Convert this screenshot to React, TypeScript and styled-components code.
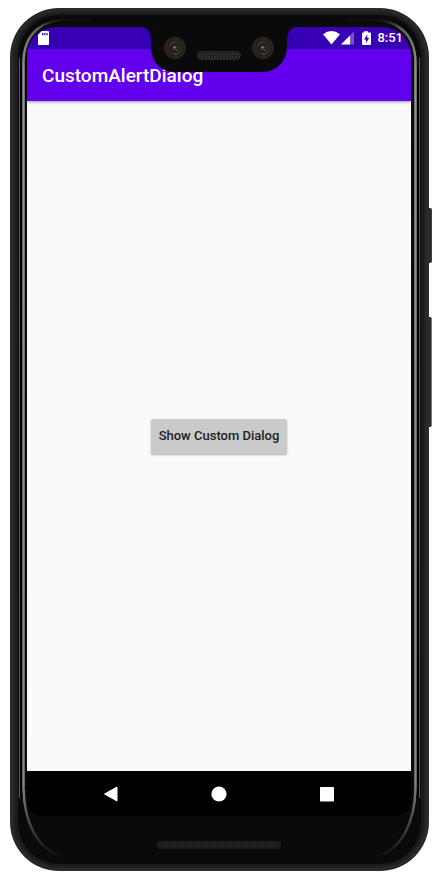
import React from "react";
import styled, { createGlobalStyle } from "styled-components";

const GlobalStyle = createGlobalStyle`
  *, *::before, *::after { box-sizing: border-box; }
  html, body { margin: 0; background: #fff; }
  body { font-family: Roboto, "Liberation Sans", sans-serif; }
`;

const Page = styled.main`
  display: grid;
  min-height: 100vh;
  padding: 8px 11px 9px 10px;
`;

const Phone = styled.div`
  position: relative;
  display: flex;
  border-radius: 49px;
  padding: 1px;
  background: #2c2c2d;
`;

const Frame = styled.div`
  flex: 1;
  display: flex;
  border-radius: 48px;
  padding: 6px 7px;
  background: #1d1d1d;
  box-shadow: inset 0 0 0 2px #2a2a2b, inset 0 0 0 4px #232324, inset 0 0 3px 5px #1a1a1b;
`;

const Bezel = styled.div`
  flex: 1;
  display: flex;
  flex-direction: column;
  border-radius: 41px;
  padding: 12px 10px 0 9px;
  background: #0a0a0a;
`;

const Rim = styled.svg`
  position: absolute;
  inset: 0;
  width: 100%;
  height: 100%;
  pointer-events: none;
`;

const SideKey = styled.span<{ $top: number; $height: number; $edge: string }>`
  position: absolute;
  left: 100%;
  top: ${(p) => p.$top}px;
  width: 3px;
  height: ${(p) => p.$height}px;
  border-radius: 0 2px 2px 0;
  background: #2b2828;
  border-right: 1px solid ${(p) => p.$edge};
`;

const Screen = styled.div`
  position: relative;
  flex: 1;
  display: flex;
  flex-direction: column;
  overflow: hidden;
  border-radius: 28px 28px 16px 16px;
  background: #000;
`;

const StatusBar = styled.div`
  display: flex;
  align-items: center;
  justify-content: space-between;
  height: 22px;
  padding: 0 8px 0 11px;
  background: #3700b3;
  color: #fff;
`;

const StatusGroup = styled.div`
  display: flex;
  align-items: center;
`;

const Clock = styled.time`
  margin-left: 4px;
  font-size: 13px;
  line-height: 22px;
  font-weight: 500;
`;

const AppBar = styled.header`
  position: relative;
  display: flex;
  align-items: center;
  height: 52px;
  padding: 2px 15px 0;
  background: #6200ee;
  box-shadow: 0 1px 3px rgba(0, 0, 0, 0.4);
`;

const Title = styled.h1`
  margin: 0;
  color: #fff;
  font-size: 19px;
  line-height: 24px;
  font-weight: 500;
`;

const Notch = styled.svg`
  position: absolute;
  top: 0;
  left: 50%;
  width: 152px;
  height: 46px;
  transform: translateX(-50%);
`;

const Content = styled.section`
  flex: 1;
  display: grid;
  place-items: center;
  background: #fafafa;
`;

const DialogButton = styled.button`
  height: 35px;
  padding: 0 8px;
  border: 0;
  border-radius: 2px;
  background: #c9cac9;
  box-shadow: 0 1px 2px rgba(0, 0, 0, 0.3);
  color: #1e1e1e;
  font-family: inherit;
  font-size: 13px;
  line-height: 16px;
  font-weight: 500;
`;

const NavBar = styled.nav`
  display: flex;
  align-items: center;
  justify-content: center;
  gap: 84px;
  height: 45px;
  background: #000;
`;

const NavButton = styled.button`
  display: grid;
  place-items: center;
  width: 24px;
  height: 24px;
  padding: 0;
  border: 0;
  background: none;
`;

const Chin = styled.div`
  display: flex;
  justify-content: center;
  height: 48px;
  padding-top: 25px;
`;

const Speaker = styled.svg`
  width: 124px;
  height: 8px;
`;

const Lens = ({ x, y }: { x: number; y: number }) => (
  <g transform={`translate(${x} ${y})`}>
    <circle r="11" fill="#2a231c" />
    <circle r="7.500" fill="#1b1918" />
    <circle r="6" fill="none" stroke="#34302e" strokeWidth="1.5" />
    <path d="M-5-3A6 6 0 0 1 0-6M5 3A6 6 0 0 1-1 6" fill="none" stroke="#55504d" />
    <circle r="4" fill="#292626" />
    <circle cx="-.5" cy="-.5" r="1.200" fill="#94847b" />
    <circle cx="1.500" cy="2" r="1" fill="#4b4549" />
  </g>
);

export default function App() {
  return (
    <>
      <GlobalStyle />
      <Page>
        <Phone>
          <Frame>
            <Bezel>
              <Screen>
                <StatusBar>
                  <svg width="11" height="14" viewBox="0 0 11 14" aria-label="SD card">
                    <path d="M3.600 0H10q1 0 1 1v12q0 1-1 1H1q-1 0-1-1V4z" fill="#fff" />
                    <path d="M4 2h1.300v2.300H4zM6.200 2h1.300v2.300H6.200zM8.400 2h1.300v2.300H8.400z" fill="#3700b3" />
                  </svg>
                  <StatusGroup>
                    <svg width="50" height="14" viewBox="0 0 50 14" aria-label="Network and battery">
                      <path d="M0 3.300Q8.500-3.300 17 3.300L8.500 13.500z" fill="#fff" />
                      <path d="M31 0.500V13.500H18z" fill="#fff" opacity=".32" />
                      <path d="M27 4.500V13.500H18z" fill="#fff" />
                      <path d="M41 1.500V.3h4v1.200h2q1 0 1 1V13q0 1-1 1h-7q-1 0-1-1V2.500q0-1 1-1z" fill="#fff" />
                      <path d="M44.300 3.500L41 8.500h2v3.500l3.200-5h-1.900z" fill="#3700b3" />
                    </svg>
                    <Clock>8:51</Clock>
                  </StatusGroup>
                </StatusBar>
                <AppBar>
                  <Title>CustomAlertDialog</Title>
                </AppBar>
                <Content>
                  <DialogButton type="button">Show Custom Dialog</DialogButton>
                </Content>
                <NavBar aria-label="System navigation">
                  <NavButton type="button" aria-label="Back">
                    <svg width="16" height="16" viewBox="0 0 16 16">
                      <path d="M1.500 8L14 1V15z" fill="#fff" stroke="#fff" strokeLinejoin="round" />
                    </svg>
                  </NavButton>
                  <NavButton type="button" aria-label="Home">
                    <svg width="16" height="16" viewBox="0 0 16 16">
                      <circle cx="8" cy="8" r="7.600" fill="#fff" />
                    </svg>
                  </NavButton>
                  <NavButton type="button" aria-label="Recent apps">
                    <svg width="16" height="16" viewBox="0 0 16 16">
                      <rect x="1" y="1" width="14" height="14.500" rx=".8" fill="#fff" />
                    </svg>
                  </NavButton>
                </NavBar>
                <Notch viewBox="0 0 152 46" aria-hidden="true">
                  <defs>
                    <pattern id="mesh" width="3" height="3" patternUnits="userSpaceOnUse">
                      <path d="M0 0L3 3M3 0L0 3" stroke="#444" strokeWidth=".6" />
                    </pattern>
                  </defs>
                  <path d="M0 0C5 1 8 6 8 14V19C8 34 17 45 32 45H118C134 45 144 34 144 19V14C144 6 147 1 152 0z" fill="#0a0a0a" />
                  <Lens x={32} y={21} />
                  <Lens x={120} y={21} />
                  <rect x="54" y="24" width="44" height="9" rx="4.500" fill="#151515" />
                  <rect x="54" y="24" width="44" height="9" rx="4.500" fill="url(#mesh)" />
                </Notch>
              </Screen>
              <Chin>
                <Speaker viewBox="0 0 124 8" aria-hidden="true">
                  <rect width="124" height="8" rx="3" fill="#1b1b1b" />
                  <path d="M2 2H122M2 4H122M2 6H122" stroke="#292929" strokeDasharray="1 1" />
                </Speaker>
              </Chin>
            </Bezel>
          </Frame>
          <Rim viewBox="0 0 419 863" preserveAspectRatio="none" aria-hidden="true">
            <defs>
              <linearGradient id="rim" gradientUnits="userSpaceOnUse" x1="0" y1="11" x2="0" y2="850">
                <stop offset="0" stopColor="#0c0c0c" />
                <stop offset=".012" stopColor="#666" />
                <stop offset=".06" stopColor="#929292" />
                <stop offset=".91" stopColor="#858585" />
                <stop offset=".96" stopColor="#444" />
                <stop offset="1" stopColor="#0c0c0c" />
              </linearGradient>
            </defs>
            <g fill="none">
              <path d="M11.500 60V790M407.500 60V790" stroke="#000" strokeWidth="3" />
              <path d="M80 11H60C34 11 13 24 13.500 56V780C14 812 26 842 54 849" stroke="url(#rim)" strokeWidth="2.500" />
              <path d="M339 11H359C385 11 406 24 405.500 56V780C405 812 393 842 365 849" stroke="url(#rim)" strokeWidth="2.500" />
              <path d="M9.500 50V790M409.500 50V790" stroke="#5c5c5c" />
            </g>
          </Rim>
          <SideKey $top={200} $height={55} $edge="#403d3c" />
          <SideKey $top={309} $height={110} $edge="#777" />
        </Phone>
      </Page>
    </>
  );
}
